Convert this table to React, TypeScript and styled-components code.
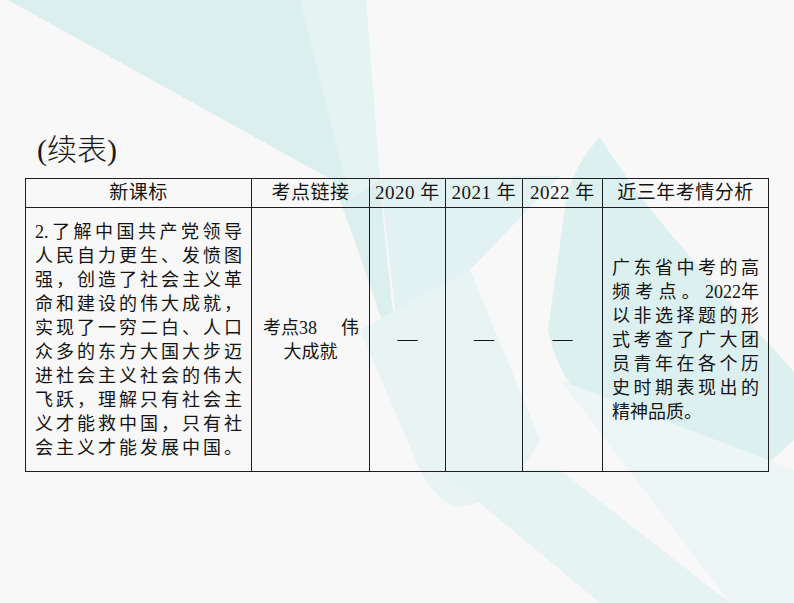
import React from "react";
import styled, { createGlobalStyle } from "styled-components";

const Global = createGlobalStyle`
  html, body { margin: 0; padding: 0; }
  body {
    background: #f8f8f8;
    font-family: "Liberation Serif", "Noto Sans CJK SC", serif;
    color: #141414;
  }
`;

const Page = styled.div`
  position: relative;
  width: 794px;
  height: 603px;
  overflow: hidden;
  background: #f8f8f8;
`;

const Backdrop = styled.svg`
  position: absolute;
  left: 0;
  top: 0;
  width: 794px;
  height: 603px;
`;

const Content = styled.main`
  position: relative;
  display: flex;
  flex-direction: column;
  align-items: flex-start;
  padding: 130px 0 0 25px;
`;

const Title = styled.h1`
  margin: 0 0 8px 12px;
  font-size: 30px;
  line-height: 40px;
  font-weight: 300;
  color: #1a1a1a;
`;

const Table = styled.table`
  border-collapse: collapse;
  table-layout: fixed;
  width: 743px;
`;

const HeadCell = styled.th`
  border: 1.5px solid #1e1e1e;
  height: 28px;
  padding: 0;
  font-weight: 400;
  font-size: 19px;
  letter-spacing: 0.5px;
  line-height: 28px;
  text-align: center;
  vertical-align: middle;
  white-space: nowrap;
`;

const BodyCell = styled.td`
  border: 1.5px solid #1e1e1e;
  height: 263px;
  padding: 0 9px;
  vertical-align: middle;
  font-size: 18px;
  line-height: 24px;
  text-align: center;
`;

const Line = styled.span<{ $last?: boolean }>`
  display: block;
  text-align: justify;
  text-align-last: ${(p) => (p.$last ? "left" : "justify")};
  white-space: nowrap;
`;

const Tight = styled.span`
  display: inline-block;
`;

const SplitLine = styled.span`
  display: flex;
  justify-content: space-between;
  padding: 0 1px 0 2px;
`;

const CenterLine = styled.span`
  display: block;
  text-align: center;
`;

const Dash = styled.span`
  font-size: 20px;
  line-height: 24px;
`;

const colWidths = [226, 118, 76, 77, 80, 166];
const heads = ["新课标", "考点链接", "2020 年", "2021 年", "2022 年", "近三年考情分析"];

const standardLines: React.ReactNode[] = [
  <>
    <Tight>2.</Tight>了解中国共产党领导
  </>,
  "人民自力更生、发愤图",
  "强，创造了社会主义革",
  "命和建设的伟大成就，",
  "实现了一穷二白、人口",
  "众多的东方大国大步迈",
  "进社会主义社会的伟大",
  "飞跃，理解只有社会主",
  "义才能救中国，只有社",
  "会主义才能发展中国。",
];

const analysisLines: React.ReactNode[] = [
  "广东省中考的高",
  <>
    频考点。<Tight>2022年</Tight>
  </>,
  "以非选择题的形",
  "式考查了广大团",
  "员青年在各个历",
  "史时期表现出的",
  "精神品质。",
];

export default function App() {
  return (
    <Page lang="zh-CN">
      <Global />
      <Backdrop viewBox="0 0 794 603" aria-hidden="true">
        <path d="M8 0 L366 0 C374 110 382 220 393 312 Q389 327 380 315 C362 262 348 220 332 180 Z" fill="#dcefef" />
        <path d="M300 0 L366 0 L380 180 L350 200 Z" fill="#e5f3f3" />
        <path d="M380 178 L560 176 L472 268 C445 292 418 308 396 318 Z" fill="#e2f2f2" />
        <path d="M600 137 C586 152 572 172 566 200 L548 330 C560 400 640 470 700 494 Q725 502 752 478 L794 440 L794 372 C730 300 650 220 600 137 Z" fill="#ddf0f0" />
        <path d="M360 330 L470 270 L540 440 C520 480 480 510 456 506 Q436 500 420 470 Z" fill="#e8f3f4" />
        <path d="M440 470 L560 470 L730 603 L600 603 Z" fill="#e6f3f3" />
        <path d="M560 380 L794 470 L794 603 L730 603 Z" fill="#edf6f6" />
      </Backdrop>
      <Content>
        <Title>(续表)</Title>
        <Table>
          <colgroup>
            {colWidths.map((w, i) => (
              <col key={i} style={{ width: w }} />
            ))}
          </colgroup>
          <thead>
            <tr>
              {heads.map((h) => (
                <HeadCell key={h}>{h}</HeadCell>
              ))}
            </tr>
          </thead>
          <tbody>
            <tr>
              <BodyCell>
                {standardLines.map((l, i) => (
                  <Line key={i}>{l}</Line>
                ))}
              </BodyCell>
              <BodyCell>
                <SplitLine>
                  <span>考点38</span>
                  <span>伟</span>
                </SplitLine>
                <CenterLine>大成就</CenterLine>
              </BodyCell>
              <BodyCell>
                <Dash>—</Dash>
              </BodyCell>
              <BodyCell>
                <Dash>—</Dash>
              </BodyCell>
              <BodyCell>
                <Dash>—</Dash>
              </BodyCell>
              <BodyCell>
                {analysisLines.map((l, i) => (
                  <Line key={i} $last={i === analysisLines.length - 1}>
                    {l}
                  </Line>
                ))}
              </BodyCell>
            </tr>
          </tbody>
        </Table>
      </Content>
    </Page>
  );
}
